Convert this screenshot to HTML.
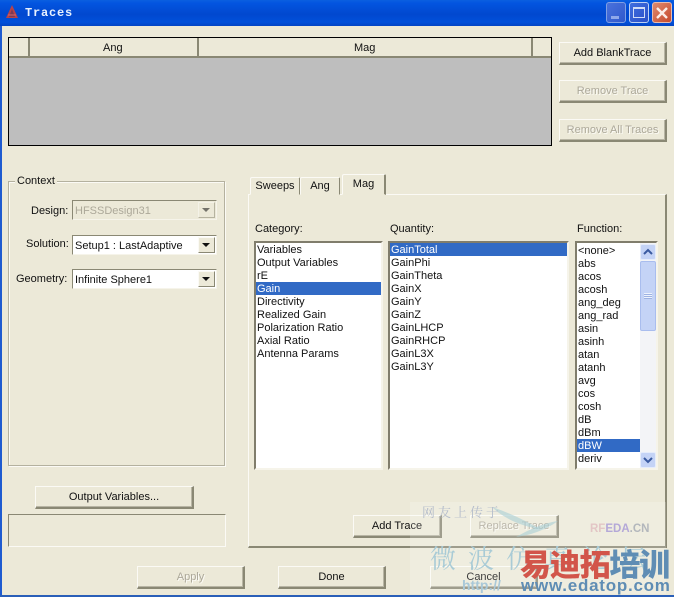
<!DOCTYPE html>
<html><head><meta charset="utf-8">
<style>
html,body{margin:0;padding:0}
body{width:674px;height:597px;overflow:hidden;position:relative;background:#ece9d8;font:11px/13px "Liberation Sans","Noto Sans CJK SC",sans-serif;color:#111}
.a{position:absolute;box-sizing:border-box;white-space:nowrap}
.btn{position:absolute;box-sizing:border-box;background:#ece9d8;border:1px solid;border-color:#fbfaf5 #8a8874 #8a8874 #fbfaf5;box-shadow:inset -1px -1px 0 #b8b5a4;text-align:center;line-height:21px;color:#111;border-bottom-width:2px;border-right-width:2px}
.dis{color:#aca899;text-shadow:1px 1px 0 #fbfaf5}
.lab{position:absolute;white-space:nowrap;line-height:13px}
.combo{position:absolute;box-sizing:border-box;left:72px;width:145px;height:20px;background:#fff;border:1px solid;border-color:#8a8874 #f6f4ea #f6f4ea #8a8874;padding:4px 2px 0;line-height:13px}
.arr{position:absolute;right:1px;top:1px;width:17px;height:16px;background:#ece9d8;border:1px solid;border-color:#fbfaf5 #8a8874 #8a8874 #fbfaf5;box-sizing:border-box}
.arr:after{content:"";position:absolute;left:3px;top:5px;border:4px solid transparent;border-top:4px solid #111;border-bottom:0}
.list{position:absolute;box-sizing:border-box;background:#fff;border:2px solid;border-color:#807d6c #f6f4ea #f6f4ea #807d6c;top:241px;height:229px;overflow:hidden}
.list div{padding-left:1px;height:13px;line-height:15px;white-space:nowrap}
.sel{background:#316ac5;color:#fff}
.tab{position:absolute;box-sizing:border-box;background:#ece9d8;border:1px solid;border-color:#fbfaf5 #8a8874 transparent #fbfaf5;text-align:center;border-radius:2px 2px 0 0}
</style></head><body>

<!-- title bar -->
<div class="a" style="left:0;top:0;width:674px;height:26px;background:linear-gradient(180deg,#0a5fe0 0,#0355e0 12%,#0148cf 55%,#0150da 85%,#0345c4 100%)"></div>
<svg class="a" style="left:5px;top:4px" width="14" height="15" viewBox="0 0 14 15"><path d="M7 1 L13 14 H1 Z" fill="#b8434a"/><path d="M7 5 L10 13 H4 Z" fill="#7c3a55"/><path d="M3 11 L11 11" stroke="#d8686a" stroke-width="1"/></svg>
<div class="a" style="left:25px;top:6px;color:#e8f2ff;font:bold 12px/14px 'Liberation Mono',monospace;letter-spacing:.8px">Traces</div>

<!-- window controls -->
<div class="a" style="left:606px;top:2px;width:20px;height:21px;background:linear-gradient(135deg,#4a72dc,#2f58cc);border:1px solid #7f9fe4;border-radius:3px"><div class="a" style="left:4px;top:13px;width:8px;height:3px;background:#8fa8ea"></div></div>
<div class="a" style="left:629px;top:2px;width:20px;height:21px;background:linear-gradient(135deg,#3f6ede,#2a50c8);border:1px solid #bcd0f3;border-radius:3px"><div class="a" style="left:3px;top:4px;width:12px;height:11px;border:1px solid #cfdcf7;border-top-width:2px"></div></div>
<div class="a" style="left:652px;top:2px;width:20px;height:21px;background:linear-gradient(135deg,#de8a70,#c64a2c);border:1px solid #e8bcae;border-radius:3px">
<svg class="a" style="left:2px;top:3px" width="14" height="14" viewBox="0 0 14 14"><path d="M2 2 L12 12 M12 2 L2 12" stroke="#fbeee8" stroke-width="2.4"/></svg></div>

<!-- window borders -->
<div class="a" style="left:0;top:26px;width:2px;height:571px;background:#1f5bd0"></div>
<div class="a" style="left:0;top:595px;width:674px;height:2px;background:#2a5fb8"></div>

<!-- table -->
<div class="a" style="left:8px;top:37px;width:544px;height:109px;background:#bebebe;border:1px solid #000"></div>
<div class="a" style="left:9px;top:38px;width:542px;height:20px;background:#ece9d8;border-bottom:2px solid #8a8874"></div>
<div class="a" style="left:28px;top:38px;width:2px;height:20px;background:#8a8874"></div>
<div class="a" style="left:197px;top:38px;width:2px;height:20px;background:#8a8874"></div>
<div class="a" style="left:531px;top:38px;width:2px;height:20px;background:#8a8874"></div>
<div class="lab" style="left:103px;top:42px">Ang</div>
<div class="lab" style="left:354px;top:42px">Mag</div>

<!-- right buttons -->
<div class="btn" style="left:559px;top:42px;width:108px;height:23px">Add BlankTrace</div>
<div class="btn dis" style="left:559px;top:80px;width:108px;height:23px">Remove Trace</div>
<div class="btn dis" style="left:559px;top:119px;width:108px;height:23px">Remove All Traces</div>

<!-- context -->
<div class="a" style="left:8px;top:181px;width:217px;height:285px;border:1px solid #b4b19f;box-shadow:1px 1px 0 #fbfaf5,inset 1px 1px 0 #fbfaf5"></div>
<div class="lab" style="left:15px;top:175px;background:#ece9d8;padding:0 2px">Context</div>
<div class="lab" style="left:31px;top:205px">Design:</div>
<div class="lab" style="left:26px;top:238px">Solution:</div>
<div class="lab" style="left:16px;top:273px">Geometry:</div>
<div class="combo" style="top:200px;background:#ece9d8;color:#aca899">HFSSDesign31<div class="arr" style="opacity:.55"></div></div>
<div class="combo" style="top:235px">Setup1 : LastAdaptive<div class="arr"></div></div>
<div class="combo" style="top:269px">Infinite Sphere1<div class="arr"></div></div>

<div class="btn" style="left:35px;top:486px;width:159px;height:23px">Output Variables...</div>
<div class="a" style="left:8px;top:514px;width:218px;height:33px;border:1px solid;border-color:#8a8874 #fbfaf5 #fbfaf5 #8a8874"></div>

<!-- tab panel -->
<div class="a" style="left:248px;top:194px;width:419px;height:354px;border:1px solid;border-color:#fbfaf5 #8a8874 #8a8874 #fbfaf5;border-right-width:2px;border-bottom-width:2px"></div>
<div class="tab" style="left:250px;top:177px;width:50px;height:18px;line-height:16px">Sweeps</div>
<div class="tab" style="left:300px;top:177px;width:40px;height:18px;line-height:16px">Ang</div>
<div class="tab" style="left:342px;top:174px;width:44px;height:21px;line-height:18px;border-right-width:2px;z-index:2">Mag</div>

<div class="lab" style="left:255px;top:222px;line-height:15px">Category:</div>
<div class="lab" style="left:390px;top:222px;line-height:15px">Quantity:</div>
<div class="lab" style="left:577px;top:222px;line-height:15px">Function:</div>

<div class="list" style="left:254px;width:129px">
<div>Variables</div><div>Output Variables</div><div>rE</div><div class="sel">Gain</div><div>Directivity</div><div>Realized Gain</div><div>Polarization Ratio</div><div>Axial Ratio</div><div>Antenna Params</div>
</div>
<div class="list" style="left:388px;width:181px">
<div class="sel">GainTotal</div><div>GainPhi</div><div>GainTheta</div><div>GainX</div><div>GainY</div><div>GainZ</div><div>GainLHCP</div><div>GainRHCP</div><div>GainL3X</div><div>GainL3Y</div>
</div>
<div class="list" style="left:575px;width:83px;padding-top:1px">
<div>&lt;none&gt;</div><div>abs</div><div>acos</div><div>acosh</div><div>ang_deg</div><div>ang_rad</div><div>asin</div><div>asinh</div><div>atan</div><div>atanh</div><div>avg</div><div>cos</div><div>cosh</div><div>dB</div><div>dBm</div><div class="sel" style="width:62px">dBW</div><div>deriv</div>
</div>
<!-- scrollbar -->
<div class="a" style="left:640px;top:243px;width:16px;height:225px;background:#f3f4f7"></div>
<div class="a" style="left:640px;top:244px;width:16px;height:16px;background:#c4d3f6;border:1px solid #e5ecfb;border-radius:2px"><svg class="a" style="left:2px;top:3px" width="10" height="8"><path d="M1 6 L5 2 L9 6" fill="none" stroke="#3a5aa0" stroke-width="2"/></svg></div>
<div class="a" style="left:640px;top:261px;width:16px;height:70px;background:#c4d3f6;border:1px solid #a9bdee;border-radius:2px"><div class="a" style="left:3px;top:31px;width:8px;height:6px;background:repeating-linear-gradient(180deg,#eef3fd 0 1px,#9db2e2 1px 2px)"></div></div>
<div class="a" style="left:640px;top:452px;width:16px;height:16px;background:#c4d3f6;border:1px solid #e5ecfb;border-radius:2px"><svg class="a" style="left:2px;top:3px" width="10" height="8"><path d="M1 2 L5 6 L9 2" fill="none" stroke="#3a5aa0" stroke-width="2"/></svg></div>

<div class="btn" style="left:353px;top:515px;width:89px;height:23px">Add Trace</div>
<div class="btn dis" style="left:470px;top:515px;width:89px;height:23px">Replace Trace</div>

<div class="btn dis" style="left:137px;top:566px;width:108px;height:23px">Apply</div>
<div class="btn" style="left:278px;top:566px;width:108px;height:23px">Done</div>
<div class="btn" style="left:430px;top:566px;width:108px;height:23px">Cancel</div>

<!-- watermark -->
<div class="a" style="left:410px;top:502px;width:256px;height:92px;background:rgba(255,255,255,.18)"></div>
<svg class="a" style="left:490px;top:505px" width="70" height="36" viewBox="0 0 70 36"><path d="M2 2 C20 8 36 16 50 24 C34 22 14 14 2 2Z" fill="#a9cfd6" opacity=".6"/><path d="M68 16 C54 26 40 30 26 32 C40 24 54 18 68 16Z" fill="#a9cfd6" opacity=".6"/></svg>
<div class="a" style="left:422px;top:504px;color:#b4bccb;font:13px/16px 'Noto Serif CJK SC',serif;letter-spacing:3px">网友上传于</div>
<div class="a" style="left:430px;top:542px;color:#a9cbd6;font:26px/32px 'Noto Serif CJK SC',serif;letter-spacing:12px">微波仿真论坛</div>
<div class="a" style="left:590px;top:522px;font:bold 11.5px/14px 'Liberation Sans',sans-serif;color:#b5b0c8"><span style="color:#e3c6c6">RF</span><span style="color:#b4a8d8">EDA</span><span style="color:#b3b7bc">.CN</span></div>
<div class="a" style="left:462px;top:577px;color:#a9c8d8;font:bold 14px/16px 'Liberation Sans',sans-serif">http://</div>
<div class="a" style="left:520px;top:546px;font:900 31px/34px 'Noto Sans CJK SC',sans-serif;letter-spacing:-1.2px;color:#d2554a;width:154px;overflow:visible"><span>易迪拓</span><span style="color:#5f8db4">培训</span></div>
<div class="a" style="left:521px;top:577px;font:bold 17px/18px 'Liberation Sans',sans-serif;color:#5f8db4;letter-spacing:.75px">www.edatop.com</div>
</body></html>
